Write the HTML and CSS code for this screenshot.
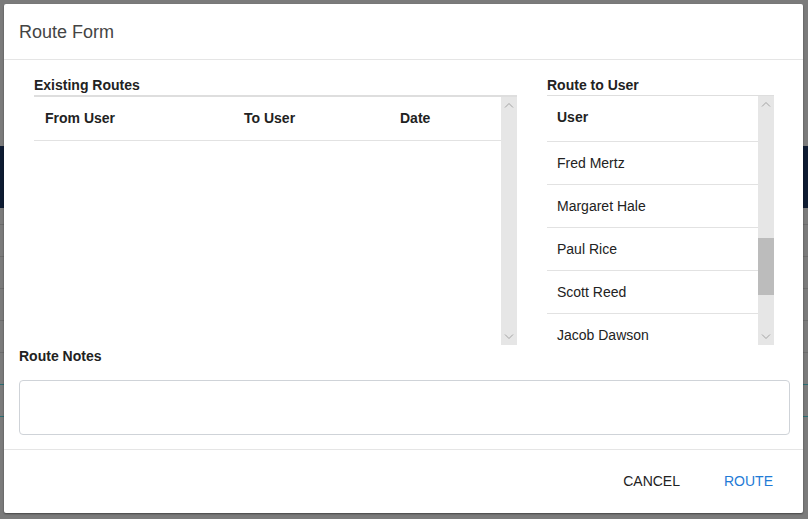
FILE: index.html
```html
<!DOCTYPE html>
<html>
<head>
<meta charset="utf-8">
<link rel="stylesheet" href="styles.css">
</head>
<body>
<div class="backdrop">
  <div class="bg-band"></div>
  <div class="bg-lines">
    <div class="bg-line"></div>
    <div class="bg-line"></div>
    <div class="bg-line"></div>
    <div class="bg-line"></div>
    <div class="bg-line"></div>
    <div class="bg-line teal"></div>
    <div class="bg-line teal"></div>
  </div>
</div>
<div class="modal">
  <div class="modal-header">Route Form</div>
  <div class="modal-body">
    <div class="row">
      <div class="col-left">
        <div class="label">Existing Routes</div>
        <div class="grid-box left-box">
          <div class="grid-content">
            <div class="grid-head">
              <div class="c1">From User</div>
              <div class="c2">To User</div>
              <div class="c3">Date</div>
            </div>
          </div>
          <div class="scrollbar">
            <svg class="arrow up" width="10" height="6" viewBox="0 0 10 6"><path d="M1 5.5 L5 1.5 L9 5.5" fill="none" stroke="#a3a3a3" stroke-width="1"/></svg>
            <div class="track"></div>
            <svg class="arrow down" width="10" height="6" viewBox="0 0 10 6"><path d="M1 0.5 L5 4.5 L9 0.5" fill="none" stroke="#a3a3a3" stroke-width="1"/></svg>
          </div>
        </div>
      </div>
      <div class="col-right">
        <div class="label">Route to User</div>
        <div class="grid-box right-box">
          <div class="list-content">
            <div class="list-head">User</div>
            <div class="list-row">Fred Mertz</div>
            <div class="list-row">Margaret Hale</div>
            <div class="list-row">Paul Rice</div>
            <div class="list-row">Scott Reed</div>
            <div class="list-row">Jacob Dawson</div>
          </div>
          <div class="scrollbar">
            <svg class="arrow up" width="10" height="6" viewBox="0 0 10 6"><path d="M1 5.5 L5 1.5 L9 5.5" fill="none" stroke="#a3a3a3" stroke-width="1"/></svg>
            <div class="track"><div class="thumb"></div></div>
            <svg class="arrow down" width="10" height="6" viewBox="0 0 10 6"><path d="M1 0.5 L5 4.5 L9 0.5" fill="none" stroke="#a3a3a3" stroke-width="1"/></svg>
          </div>
        </div>
      </div>
    </div>
    <div class="label notes-label">Route Notes</div>
    <div class="notes"></div>
  </div>
  <div class="modal-footer">
    <span class="btn">CANCEL</span>
    <span class="btn primary">ROUTE</span>
  </div>
</div>
</body>
</html>
```

FILE: styles.css
```css
html, body {
  margin: 0;
  padding: 0;
  width: 808px;
  height: 519px;
  overflow: hidden;
  background: #7b7b7b;
  font-family: "Liberation Sans", Arial, sans-serif;
  color: #222;
}

.backdrop {
  position: absolute;
  left: 0;
  top: 0;
  width: 808px;
  height: 519px;
}

.bg-band {
  position: absolute;
  left: 0;
  top: 146px;
  width: 808px;
  height: 62px;
  background: #0e1b32;
}

.bg-lines {
  position: absolute;
  left: 0;
  top: 224px;
  width: 808px;
  display: flex;
  flex-direction: column;
  gap: 31px;
}

.bg-line {
  height: 1px;
  background: #6c6c6c;
}

.bg-line.teal {
  background: #2b6e73;
}

.modal {
  position: absolute;
  left: 4px;
  top: 4px;
  width: 799px;
  height: 509px;
  background: #fff;
  border-radius: 2px;
  box-shadow: 0 1px 2px rgba(0, 0, 0, 0.45);
  display: flex;
  flex-direction: column;
}

.modal-header {
  height: 55px;
  line-height: 57px;
  padding-left: 15px;
  font-size: 18px;
  color: #444;
  border-bottom: 1px solid #e5e5e5;
}

.modal-body {
  padding: 15px 13px 0 15px;
}

.row {
  display: flex;
  padding-left: 15px;
  gap: 30px;
}

.col-left {
  width: 483px;
}

.col-right {
  width: 227px;
}

.label {
  font-weight: bold;
  font-size: 14px;
  line-height: 20px;
  height: 20px;
  color: #222;
}

.grid-box {
  height: 250px;
  display: flex;
  overflow: hidden;
}

.left-box {
  border-top: 2px solid #dedede;
  height: 248px;
}

.right-box {
  border-top: 1px solid #dedede;
  height: 249px;
}

.grid-content {
  flex: 1;
}

.grid-head {
  display: flex;
  height: 41px;
  padding-bottom: 2px;
  align-items: center;
  border-bottom: 1px solid #e2e2e2;
  font-weight: bold;
  font-size: 14px;
}

.grid-head .c1 {
  width: 199px;
  padding-left: 11px;
}

.grid-head .c2 {
  width: 156px;
}

.list-content {
  flex: 1;
}

.list-head {
  height: 45px;
  line-height: 42px;
  padding-left: 10px;
  font-weight: bold;
  font-size: 14px;
  border-bottom: 1px solid #e2e2e2;
}

.list-row {
  height: 42px;
  line-height: 42px;
  padding-left: 10px;
  font-size: 14px;
  color: #222;
  border-bottom: 1px solid #e2e2e2;
}

.scrollbar {
  width: 16px;
  background: #e6e6e6;
  display: flex;
  flex-direction: column;
  align-items: center;
}

.arrow {
  display: block;
  margin: 5px 0;
}

.track {
  flex: 1;
  width: 16px;
  position: relative;
}

.thumb {
  position: absolute;
  left: 0;
  top: 126px;
  width: 16px;
  height: 57px;
  background: #bcbcbc;
}

.notes-label {
  margin-top: 1px;
}

.notes {
  margin-top: 14px;
  height: 53px;
  border: 1px solid #cfd3d8;
  border-radius: 4px;
}

.modal-footer {
  margin-top: 14px;
  border-top: 1px solid #e5e5e5;
  flex: 1;
  display: flex;
  justify-content: flex-end;
  align-items: center;
  gap: 44px;
  padding-right: 30px;
  padding-bottom: 2px;
}

.btn {
  font-size: 14px;
  color: #222;
}

.btn.primary {
  color: #1f7bd6;
}
```
